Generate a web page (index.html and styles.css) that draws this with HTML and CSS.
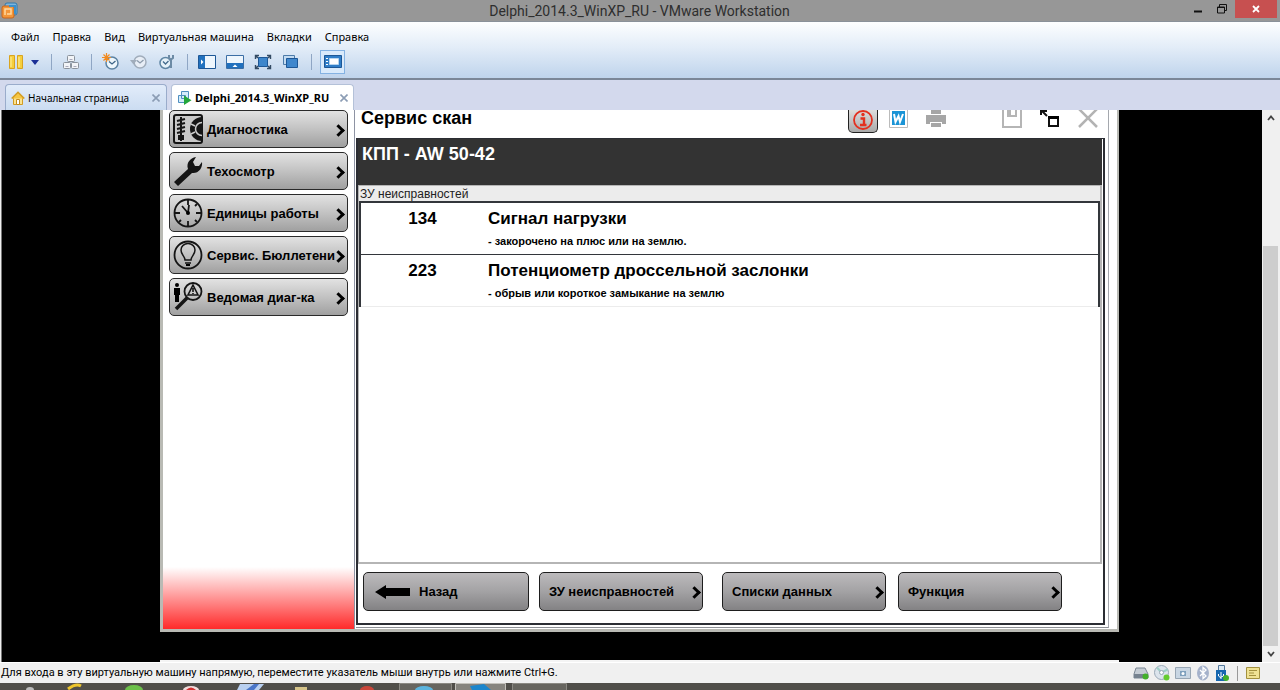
FILE: index.html
```html
<!DOCTYPE html>
<html lang="ru">
<head>
<meta charset="utf-8">
<title>Delphi_2014.3_WinXP_RU - VMware Workstation</title>
<link rel="stylesheet" href="styles.css">
</head>
<body>
<header class="titlebar">
  <svg class="app-logo" width="18" height="18" viewBox="0 0 18 18"><rect x="4" y="1" width="12" height="12" rx="2" fill="#7fb6dc" stroke="#2f78ad"/><rect x="1" y="4" width="12" height="12" rx="2" fill="#f2963a" stroke="#c8641a"/><path d="M4 13V7h6v5H6" fill="none" stroke="#ffd9a0" stroke-width="1.5"/><path d="M8 4h6v8" fill="none" stroke="#3d8fca" stroke-width="2"/></svg>
  <h1 class="title">Delphi_2014.3_WinXP_RU - VMware Workstation</h1>
  <div class="window-controls">
    <button class="win-btn" aria-label="Свернуть"><svg width="12" height="12" viewBox="0 0 12 12"><path d="M2 8.500h8" stroke="#111" stroke-width="2"/></svg></button>
    <button class="win-btn" aria-label="Восстановить"><svg width="12" height="12" viewBox="0 0 12 12"><path d="M1.500 4h7v6h-7zM1 4.500h8M3.500 4V1.500h7v6H9" fill="none" stroke="#111"/></svg></button>
    <button class="win-btn win-close" aria-label="Закрыть"><svg width="10" height="10" viewBox="0 0 10 10"><path d="M2 2l6 6M8 2L2 8" stroke="#fff" stroke-width="1.800"/></svg></button>
  </div>
</header>

<div class="chrome">
  <nav class="menu">
    <button>Файл</button><button>Правка</button><button>Вид</button><button>Виртуальная машина</button><button>Вкладки</button><button>Справка</button>
  </nav>
  <div class="toolbar">
    <button class="tool" aria-label="Пауза"><svg width="16" height="16" viewBox="0 0 16 16"><path d="M1.500 1.500h5v13h-5zM9.500 1.500h5v13h-5z" fill="#f5cf3d" stroke="#d9a420"/><path d="M3 3v10M11 3v10" stroke="#fff0a0"/></svg></button>
    <button class="tool tool-caret" aria-label="Питание"><svg width="8" height="5" viewBox="0 0 8 5"><path d="M0 0h8L4 5z" fill="#1b2f96"/></svg></button>
    <span class="sep"></span>
    <button class="tool" aria-label="Отправить Ctrl+Alt+Del"><svg width="18" height="16" viewBox="0 0 18 16"><g fill="#f2f4f7" stroke="#8a929c"><rect x="5.500" y="1.500" width="7" height="6" rx="1"/><rect x="1.500" y="8.500" width="7" height="6" rx="1"/><rect x="9.500" y="8.500" width="7" height="6" rx="1"/></g><path d="M7.500 5.500h3M3.500 12.500h3M11.500 12.500h3" stroke="#aab"/></svg></button>
    <span class="sep"></span>
    <button class="tool" aria-label="Снимок"><svg width="18" height="18" viewBox="0 0 18 18"><circle cx="10" cy="10" r="6" fill="#eef7fc" stroke="#5c83a3" stroke-width="1.500"/><path d="M7 8.500l3 2.500 3.500-3" fill="none" stroke="#3d6588" stroke-width="1.300"/><path d="M4.500 0v9M0 4.500h9M1.500 1.500l6 6M7.500 1.500l-6 6" stroke="#f18b22" stroke-width="1.200"/></svg></button>
    <button class="tool" aria-label="Вернуться к снимку"><svg width="18" height="18" viewBox="0 0 18 18"><circle cx="10" cy="9" r="6" fill="#e8eef6" stroke="#a1adbb" stroke-width="1.500"/><path d="M7 7.500l3 2.500 3.500-3" fill="none" stroke="#8d9bab" stroke-width="1.300"/><path d="M0 7h7l-3.500 4.500z" fill="#a1adbb"/></svg></button>
    <button class="tool" aria-label="Диспетчер снимков"><svg width="18" height="18" viewBox="0 0 18 18"><circle cx="7.500" cy="10" r="5.500" fill="#e6f2f9" stroke="#5f86a4" stroke-width="1.500"/><path d="M5 8.500l2.500 2.500 3-3" fill="none" stroke="#446c8d" stroke-width="1.300"/><path d="M11 2v3l2 1.500L15 5V2M13 6v9" fill="none" stroke="#6d8ba5" stroke-width="2"/></svg></button>
    <span class="sep"></span>
    <button class="tool" aria-label="Боковая панель"><svg width="18" height="14" viewBox="0 0 18 14"><path d="M.5.5h17v13H.5z" fill="#eef6fd" stroke="#1d5796"/><path d="M1 1h6v12H1z" fill="#2171be"/><path d="M3 4.500L5.500 7 3 9.500z" fill="#fff"/></svg></button>
    <button class="tool" aria-label="Панель миниатюр"><svg width="18" height="14" viewBox="0 0 18 14"><path d="M.5.5h17v13H.5z" fill="#eef6fd" stroke="#3b6ea5"/><path d="M1 8h16v5H1z" fill="#2171be"/><path d="M6.500 12L9 9.500l2.500 2.500z" fill="#fff"/></svg></button>
    <button class="tool" aria-label="Полный экран"><svg width="18" height="16" viewBox="0 0 18 16"><path d="M4.500 3.500h9v9h-9z" fill="#3d86cb" stroke="#1d5796"/><path d="M1.500 5V1.500H5M13 1.500h3.500V5M16.500 11v3.500H13M5 14.500H1.500V11M2 2l2 2M16 2l-2 2M2 14l2-2M16 14l-2-2" fill="none" stroke="#334a63" stroke-width="1.400"/></svg></button>
    <button class="tool" aria-label="Единство"><svg width="16" height="14" viewBox="0 0 16 14"><path d="M.5.5h11v9H.5z" fill="#c3dbf1" stroke="#4d7ba9"/><path d="M3.500 3.500h11v9h-11z" fill="#3f87cd" stroke="#1d5796"/></svg></button>
    <span class="sep"></span>
    <button class="tool tool-on" aria-label="Просмотр консоли"><svg width="18" height="14" viewBox="0 0 18 14"><path d="M.5.5h17v12H.5z" fill="#2f7dc7" stroke="#1d5796"/><path d="M5.500 3.500h9v6h-9z" fill="#fff" stroke="#b7d5ef"/><path d="M2 3.500h2M2 6.500h2M2 9.500h2" stroke="#fff"/></svg></button>
  </div>
</div>

<div class="tabs">
  <div class="tab">
    <svg width="14" height="14" viewBox="0 0 14 14"><path d="M2.500 7v6.500h9V7" fill="#fbe390" stroke="#d29c23"/><path d="M.7 7.500L7 1.200l6.300 6.300" fill="#f6c643" stroke="#d29c23" stroke-width="1.500"/><path d="M5.500 8.500h3v5h-3z" fill="#fff" stroke="#c58d1c"/></svg>
    <span class="tab-label">Начальная страница</span>
    <button class="tab-close" aria-label="Закрыть вкладку"><svg width="8" height="8" viewBox="0 0 8 8"><path d="M.5.5l7 7M7.500.5l-7 7" stroke="#8b9cb4" stroke-width="1.600"/></svg></button>
  </div>
  <div class="tab tab-active">
    <svg width="14" height="14" viewBox="0 0 14 14"><path d="M3.500.5h7v7h-7zM.5 4.500h7v7h-7z" fill="#d6ecfa" stroke="#4f8fc0"/><path d="M6 4.500l7.500 4.700L6 14z" fill="#23a63c"/></svg>
    <span class="tab-label">Delphi_2014.3_WinXP_RU</span>
    <button class="tab-close" aria-label="Закрыть вкладку"><svg width="8" height="8" viewBox="0 0 8 8"><path d="M.5.5l7 7M7.500.5l-7 7" stroke="#8b9cb4" stroke-width="1.600"/></svg></button>
  </div>
</div>

<div class="viewport">
  <div class="desktop">
    <div class="guest">
      <aside class="side">
        <button class="nav-btn"><svg width="30" height="30" viewBox="0 0 30 30"><rect x="1" y="1" width="28" height="28" rx="2" fill="#c9c9c9" stroke="#151515" stroke-width="2"/><path d="M8 3v24M4 7l8-2M4 11l8-2M4 15l8-2M4 19l8-2" stroke="#151515" stroke-width="2"/><path d="M5 21h6v5H5z" fill="#151515"/><path d="M29 3a12 12 0 0 0 0 24z" fill="#151515"/><path d="M29 8.500a6.500 6.500 0 0 0 0 13" fill="none" stroke="#ccc" stroke-width="1.500"/><path d="M18 10l4 2M18 20l4-2" stroke="#ccc" stroke-width="1.500"/></svg><span>Диагностика</span><i class="chev"></i></button>
        <button class="nav-btn"><svg width="30" height="30" viewBox="0 0 30 30"><path d="M1 26L15 13C13 7 17 2 23 1l-3 5 2 4 4 0 3-4c1 6-4 12-10 11L5 30z" fill="#151515"/></svg><span>Техосмотр</span><i class="chev"></i></button>
        <button class="nav-btn"><svg width="30" height="30" viewBox="0 0 30 30"><circle cx="15" cy="15" r="13.500" fill="none" stroke="#151515" stroke-width="1.800"/><path d="M15 2v5M15 23v5M2 15h5M23 15h5M15 15L9 8M15 15l1-8M6 24l2-2M24 24l-2-2M24 6l-2 2" stroke="#151515" stroke-width="1.800"/><circle cx="15" cy="15" r="2"/></svg><span>Единицы работы</span><i class="chev"></i></button>
        <button class="nav-btn"><svg width="30" height="30" viewBox="0 0 30 30"><circle cx="15" cy="15" r="13.500" fill="none" stroke="#151515" stroke-width="1.800"/><path d="M12 20c0-4-4-5-4-10a7 6.500 0 0 1 14 0c0 5-4 6-4 10zM12 23h6" fill="none" stroke="#151515" stroke-width="1.500"/><path d="M13 24h4v2h-4z"/></svg><span>Сервис. Бюллетени</span><i class="chev"></i></button>
        <button class="nav-btn"><svg width="30" height="30" viewBox="0 0 30 30"><circle cx="4" cy="3" r="2"/><path d="M1 6h6v7H6v7H2v-7H1z"/><circle cx="20" cy="9.500" r="8.500" fill="none" stroke="#151515" stroke-width="1.800"/><path d="M20 3l5 10H15zM20 6v4M20 11v1" fill="none" stroke="#151515" stroke-width="1.600"/><path d="M14 16L3 27" stroke="#151515" stroke-width="3.500"/></svg><span>Ведомая диаг-ка</span><i class="chev"></i></button>
        <div class="glow"></div>
      </aside>
      <main class="main">
        <div class="main-head">
          <h2>Сервис скан</h2>
          <div class="head-tools">
            <button class="info" aria-label="Информация"><svg width="22" height="22" viewBox="0 0 22 22"><circle cx="11" cy="10" r="9" fill="none" stroke="#e3301f" stroke-width="1.800"/><path d="M8.500 8.500H12V15M8 15h6.500" fill="none" stroke="#e3301f" stroke-width="2.400"/><circle cx="11" cy="4.500" r="1.700" fill="#e3301f"/></svg></button>
            <button class="w-doc" aria-label="Документ"><svg width="19" height="20" viewBox="0 0 19 20"><path d="M.5.5h18v19H.5z" fill="#fff" stroke="#bbb"/><path d="M3 3h13v14H3z" fill="#1b94d6"/><path d="M5 6l1.500 8L9.500 8l1.500 6L14 6" fill="none" stroke="#fff" stroke-width="2"/></svg></button>
            <button class="printer" aria-label="Печать"><svg width="20" height="20" viewBox="0 0 20 20"><path d="M5 1h10v5H5zM0 7h20v9h-4v-2H4v2H0zM5 15h10v4H5z" fill="#a6a6a6"/></svg></button>
            <button class="save" aria-label="Сохранить"><svg width="20" height="20" viewBox="0 0 20 20"><path d="M1 1h18v18H1z" fill="#fff" stroke="#b5b5b5" stroke-width="2"/><path d="M5 1h10v8H5z" fill="#b5b5b5"/><path d="M9 2h4v5H9z" fill="#fff"/></svg></button>
            <button class="resize" aria-label="Изменить размер"><svg width="20" height="20" viewBox="0 0 20 20"><path d="M9 9h9v9H9z" fill="#fff" stroke="#111" stroke-width="2"/><path d="M8 8h11v3H8z"/><path d="M7 8L2 3M1 7V3h6" fill="none" stroke="#111" stroke-width="2"/></svg></button>
            <button class="close" aria-label="Закрыть"><svg width="20" height="20" viewBox="0 0 20 20"><path d="M1 1l18 18M19 1L1 19" stroke="#b3b3b3" stroke-width="2.500"/></svg></button>
          </div>
        </div>
        <div class="frame">
          <h3 class="unit">КПП - AW 50-42</h3>
          <div class="list">
            <table class="faults">
              <caption>ЗУ неисправностей</caption>
              <tbody>
              <tr><th scope="row">134</th><td><strong>Сигнал нагрузки</strong><small>- закорочено на плюс или на землю.</small></td></tr>
              <tr><th scope="row">223</th><td><strong>Потенциометр дроссельной заслонки</strong><small>- обрыв или короткое замыкание на землю</small></td></tr>
              </tbody>
            </table>
          </div>
          <div class="actions">
            <div class="pair"><button class="act back"><svg width="35" height="14" viewBox="0 0 35 14"><path d="M0 7L11 0v3h24v8H11v3z"/></svg><span>Назад</span></button>
            <button class="act"><span>ЗУ неисправностей</span><i class="chev"></i></button></div>
            <div class="pair pair-wide"><button class="act"><span>Списки данных</span><i class="chev"></i></button>
            <button class="act"><span>Функция</span><i class="chev"></i></button></div>
          </div>
        </div>
      </main>
    </div>
    <div class="baseline"></div>
  </div>
  <div class="scrollbar">
    <button aria-label="Вверх"><svg width="8" height="6" viewBox="0 0 8 6"><path d="M1 5l3-3.500L7 5" fill="none" stroke="#444" stroke-width="1.800"/></svg></button>
    <div class="track"><div class="thumb"></div></div>
    <button aria-label="Вниз"><svg width="8" height="6" viewBox="0 0 8 6"><path d="M1 1l3 3.500L7 1" fill="none" stroke="#444" stroke-width="1.800"/></svg></button>
  </div>
</div>

<footer class="status">
  <p>Для входа в эту виртуальную машину напрямую, переместите указатель мыши внутрь или нажмите Ctrl+G.</p>
  <div class="devices">
    <svg width="16" height="14" viewBox="0 0 16 14"><path d="M3 2h9l3 6v4H1V8z" fill="#c5ccd4" stroke="#7b8794"/><path d="M1 8h14v4H1z" fill="#76828f"/><circle cx="12.500" cy="10.500" r="3" fill="#43b02a"/></svg>
    <svg width="16" height="16" viewBox="0 0 16 16"><circle cx="7.500" cy="7.500" r="7" fill="#dce4ec" stroke="#9aa8b7"/><path d="M7.500 7.500L3 2.500M7.500 7.500l6-3" stroke="#9fd0c8" stroke-width="2"/><circle cx="7.500" cy="7.500" r="2" fill="#fff" stroke="#9aa8b7"/><circle cx="12.500" cy="12.500" r="3" fill="#65cc30"/></svg>
    <svg width="16" height="12" viewBox="0 0 16 12"><path d="M.5.500h15v11H.5z" fill="#c9d6e3" stroke="#98a6b4"/><path d="M5 4h6v5H5z" fill="#7fa0bd"/><circle cx="8" cy="6.500" r="1.500" fill="#fff"/></svg>
    <svg width="14" height="16" viewBox="0 0 14 16"><ellipse cx="7" cy="8" rx="6" ry="7.500" fill="#a5b2cb"/><path d="M4 5l6 6-3 2.500v-11L10 5l-6 6" fill="none" stroke="#fff" stroke-width="1.300"/></svg>
    <svg width="14" height="18" viewBox="0 0 14 18"><path d="M3.500 1.500h6v5h-6z" fill="#dbe8f2" stroke="#52779a"/><path d="M1 6h10v11H1z" fill="#1768b0"/><path d="M6 8v7M3.500 10v2L6 14M8.500 10v2L6 13" fill="none" stroke="#fff"/><circle cx="11" cy="14" r="3" fill="#43b02a"/></svg>
    <span class="status-sep"></span>
    <svg width="14" height="12" viewBox="0 0 14 12"><path d="M.5.500h13v11H.5z" fill="#f0e293" stroke="#a3913e"/><path d="M3 3.500h8M3 6h5M3 8.500h7" stroke="#a3913e"/></svg>
  </div>
</footer>
<div class="taskbar">
  <svg class="task-icons" width="600" height="7" viewBox="0 0 600 7"><ellipse cx="30" cy="7" rx="4" ry="3" fill="#bbb"/><path d="M68 6q8-6 13-3" fill="none" stroke="#edc52c" stroke-width="3"/><ellipse cx="134" cy="7" rx="9" ry="5" fill="#6cc04a"/><ellipse cx="191" cy="7" rx="8" ry="4" fill="#f1dcdc"/><path d="M186 7q5-5 10 0z" fill="#d32f2f"/><path d="M240 1h24l-5 6h-22z" fill="#b9d0f0"/><path d="M246 7l8-6 5 0-5 6z" fill="#4a76c8"/><path d="M295 4h12v3h-12z" fill="#d6c489"/><ellipse cx="367" cy="7" rx="7" ry="4" fill="#c9463a"/><path d="M399.500 8V.5h52V8M512.500 8V.5h54V8" fill="#67655f" stroke="#8b8983"/><path d="M455.500 8V.5h50V8" fill="#86847e" stroke="#c4c2bc"/><ellipse cx="424" cy="7" rx="9" ry="4" fill="#5bb4de"/><path d="M470 3l14-2 7 6h-19z" fill="#1c86cc"/></svg>
</div>
</body>
</html>
```

FILE: styles.css
```css
* { box-sizing: border-box; }
body { margin: 0; height: 100vh; display: flex; flex-direction: column; overflow: hidden; font-family: "Liberation Sans", Arial, sans-serif; color: #000; background: #d3d9ed; }
button { font: inherit; color: inherit; margin: 0; padding: 0; border: 0; background: none; display: flex; align-items: center; justify-content: center; white-space: nowrap; }
svg { display: block; flex: none; }
h1, h2, h3, p { margin: 0; }

.titlebar { height: 22px; flex: none; display: flex; align-items: center; background: #979797; border-bottom: 1px solid #8a9199; position: relative; }
.app-logo { margin-left: 1px; }
.title { flex: 1; padding-right: 20px; text-align: center; font: 14px/22px Roboto, sans-serif; color: #2e2e2e; }
.window-controls { display: flex; align-self: flex-start; position: absolute; right: 3px; top: 0; }
.win-btn { width: 24px; height: 18px; }
.win-close { width: 42px; background: #c75050; margin-left: 1px; }

.chrome { flex: none; height: 58px; border-bottom: 2px solid #7b8798; background: linear-gradient(#fdfeff, #e3edf8 45%, #bfd4ec); padding: 5px 2px 0; font: 11px/20px "Noto Sans", sans-serif; }
.menu { display: flex; gap: 13px; padding-left: 9px; height: 20px; }
.toolbar { display: flex; align-items: center; height: 30px; padding-left: 5px; }
.tool { width: 28px; height: 24px; flex: none; }
.tool:first-child { width: 18px; }
.tool-caret { width: 20px; }
.sep { width: 1px; height: 16px; background: #8fa6c4; margin: 0 5px 0 6px; }
.tool-on { width: 25px; margin-left: 3px; border: 1px solid #84b2e2; background: #d9eafb; }

.tabs { flex: none; height: 30px; display: flex; align-items: flex-end; gap: 4px; padding: 4px 5px 0; background: #d3d9ed; font: 10px/16px "Noto Sans", sans-serif; }
.tab { width: 162px; height: 26px; display: flex; align-items: center; gap: 3px; padding: 0 6px 0 5px; border: 1px solid #9aaccb; border-bottom: 0; border-radius: 4px 4px 0 0; background: linear-gradient(#e2ecfa, #cbdcf1); white-space: nowrap; }
.tab-active { width: 183px; padding: 0 5px 0 6px; background: #fff; border-color: #b4c1d8; font-weight: bold; font-size: 11px; }
.tab-label { flex: 1; }
.tab-close { width: 8px; height: 16px; }

.viewport { flex: 1; min-height: 0; display: flex; padding: 0 1px; background: #f0f0f0; }
.desktop { flex: 1; min-width: 0; display: flex; flex-direction: column; justify-content: space-between; background: #000; border-left: 1px solid #777; padding: 0 143px 0 158px; }
.guest { flex: none; height: 94.6%; display: flex; background: #fff; border: solid #b9bab4; border-width: 0 2px 3px 3px; }
.baseline { height: 2px; background: #f4f4f4; }

.side { width: 192px; flex: none; display: flex; flex-direction: column; gap: 4px; border-right: 1px solid #8e93a3; }
.nav-btn { position: relative; margin: 0 6px; height: 38px; justify-content: flex-start; gap: 4px; padding-left: 3px; border: 1px solid #2a2a2a; border-radius: 5px; background: linear-gradient(#e2e2e2, #c2c2c2 50%, #a0a0a0); font-weight: bold; font-size: 13px; }
.chev { position: absolute; right: 4px; top: 15px; width: 9px; height: 9px; border: solid #000; border-width: 3px 3px 0 0; transform: rotate(45deg); }
.glow { margin-top: auto; height: 62px; background: linear-gradient(#fff, #ff2a2a); }

.main { flex: 1; min-width: 0; display: flex; flex-direction: column; margin: 0 8px 1px 1px; border-right: 1px solid #a5a8ae; border-bottom: 1px solid #8d9095; padding: 0 3px 2px 0; }
.main-head { height: 28px; flex: none; display: flex; justify-content: space-between; padding: 0 7px 0 5px; }
.main-head h2 { font-size: 18px; line-height: 17px; }
.head-tools { display: flex; align-items: flex-start; }
.head-tools button { height: 18px; overflow: hidden; align-items: flex-end; }
.head-tools .info { width: 30px; height: 23px; align-items: center; border: 1px solid #222; border-top: 0; border-radius: 0 0 5px 5px; background: linear-gradient(#ddd, #a9a9a9); }
.w-doc { margin-left: 11px; }
.printer { margin-left: 18px; }
.save { margin-left: 56px; }
.resize { margin-left: 18px; }
.close { margin-left: 18px; }
.frame { flex: 1; display: flex; flex-direction: column; border: 2px solid #2b2d33; border-top-width: 1px; }
.unit { height: 46px; flex: none; padding: 4px; margin-right: 1px; background: #333; color: #fff; font-size: 18px; line-height: 22px; }
.list { flex: 1; margin: 0 1px 0 0; border: solid #b5b5b5; border-width: 1px 2px 2px 1px; }
.faults { width: 100%; border-collapse: collapse; }
.faults caption { height: 15px; padding-left: 1px; text-align: left; background: #ececec; color: #222; font-size: 12px; line-height: 16px; }
.faults tbody { border: 2px solid #33363b; border-bottom: 1px solid #ececec; }
.faults tr + tr { border-top: 1px solid #33363b; }
.faults tr { height: 52px; }
.faults th { width: 124px; padding: 6px 0 0; vertical-align: top; font-size: 17px; line-height: 20px; }
.faults td { padding: 6px 0 0 4px; vertical-align: top; }
.faults strong { display: block; font-size: 17px; line-height: 20px; }
.faults small { display: block; font-size: 11px; font-weight: bold; line-height: 14px; margin-top: 5px; }
.actions { flex: none; display: flex; gap: 19px; padding: 8px 41px 12px 5px; }
.pair { flex: 1; display: flex; gap: 10px; }
.pair-wide { gap: 12px; }
.act { position: relative; flex: 1; height: 39px; justify-content: flex-start; padding-left: 9px; border: 1px solid #1e1e1e; border-radius: 5px; background: linear-gradient(#bcbabc, #a3a2a4 50%, #838284); font-weight: bold; font-size: 13px; }
.act .chev { right: 3px; }
.back { gap: 9px; padding-left: 11px; }

.scrollbar { width: 17px; flex: none; display: flex; flex-direction: column; background: #f0f0f0; }
.scrollbar button { height: 16px; }
.track { flex: 1; display: flex; flex-direction: column; }
.thumb { margin: auto 1px 0; height: 77%; background: #cdcdcd; }

.status { flex: none; height: 21px; display: flex; justify-content: space-between; align-items: center; padding: 0 20px 0 1px; background: #f0f0f0; border-top: 1px solid #fff; font: 11px/20px Roboto, sans-serif; }
.devices { display: flex; align-items: center; gap: 5px; }
.status-sep { width: 1px; height: 15px; background: #999; margin: 0 3px; }
.taskbar { flex: none; height: 7px; background: #504e49; overflow: hidden; }
```
